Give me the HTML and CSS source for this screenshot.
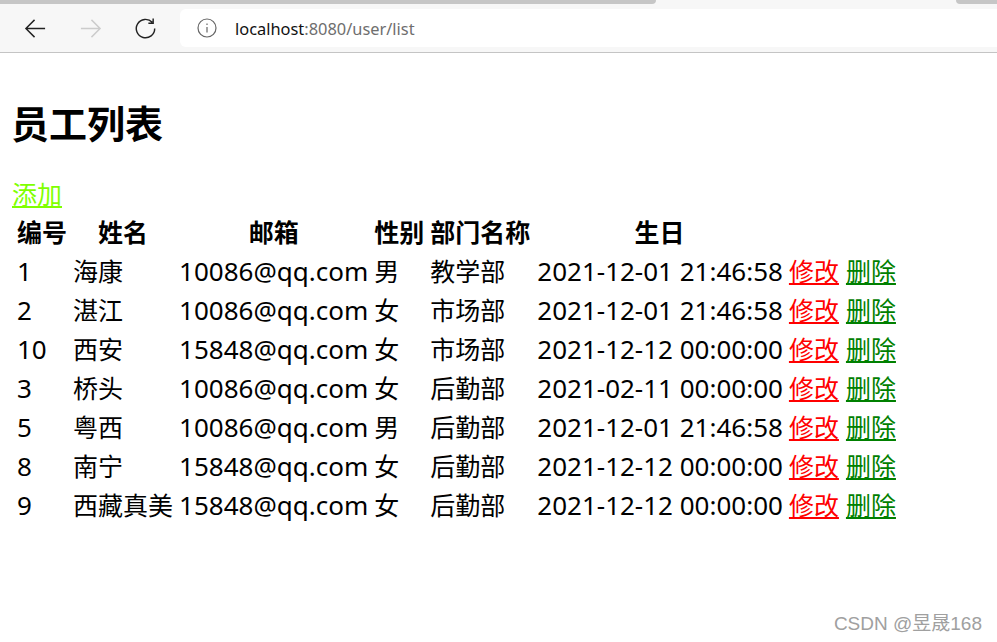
FILE: index.html
```html
<!DOCTYPE html>
<html lang="zh-CN">
<head>
<meta charset="utf-8">
<title>员工列表</title>
<link rel="stylesheet" href="styles.css">
</head>
<body>
<header class="browser">
  <div class="tabstrip"><div class="tab-active"></div><div class="tab-next"></div></div>
  <div class="toolbar">
    <svg class="nav-icon" viewBox="0 0 24 24"><path d="M22 12H2M11 3l-9 9 9 9" fill="none" stroke="#222" stroke-width="1.5"/></svg>
    <svg class="nav-icon" viewBox="0 0 24 24"><path d="M2 12h20M13 3l9 9-9 9" fill="none" stroke="#ccc" stroke-width="1.5"/></svg>
    <svg class="nav-icon" viewBox="0 0 24 24"><path d="M19 5.500A9.600 9.600 0 1 0 21.600 12M20 1.500V6.500H15" fill="none" stroke="#222" stroke-width="1.500"/></svg>
    <div class="address">
      <svg class="info" viewBox="0 0 20 20"><circle cx="10" cy="10" r="9" fill="none" stroke="#666" stroke-width="1.200"/><path d="M10 9v5.500M10 5.500v1.500" stroke="#666" stroke-width="1.200"/></svg>
      <span class="host">localhost</span><span class="path">:8080/user/list</span>
    </div>
  </div>
</header>
<main class="page">
  <h1>员工列表</h1>
  <a class="add" href="#">添加</a>
  <table>
    <thead>
      <tr><th>编号</th><th>姓名</th><th>邮箱</th><th>性别</th><th>部门名称</th><th>生日</th></tr>
    </thead>
    <tbody>
      <tr><td class="latin">1</td><td>海康</td><td class="latin">10086@qq.com</td><td>男</td><td>教学部</td><td class="latin date">2021-12-01 21:46:58</td><td><a class="edit" href="#">修改</a></td><td class="del-cell"><a class="del" href="#">删除</a></td></tr>
      <tr><td class="latin">2</td><td>湛江</td><td class="latin">10086@qq.com</td><td>女</td><td>市场部</td><td class="latin date">2021-12-01 21:46:58</td><td><a class="edit" href="#">修改</a></td><td class="del-cell"><a class="del" href="#">删除</a></td></tr>
      <tr><td class="latin">10</td><td>西安</td><td class="latin">15848@qq.com</td><td>女</td><td>市场部</td><td class="latin date">2021-12-12 00:00:00</td><td><a class="edit" href="#">修改</a></td><td class="del-cell"><a class="del" href="#">删除</a></td></tr>
      <tr><td class="latin">3</td><td>桥头</td><td class="latin">10086@qq.com</td><td>女</td><td>后勤部</td><td class="latin date">2021-02-11 00:00:00</td><td><a class="edit" href="#">修改</a></td><td class="del-cell"><a class="del" href="#">删除</a></td></tr>
      <tr><td class="latin">5</td><td>粤西</td><td class="latin">10086@qq.com</td><td>男</td><td>后勤部</td><td class="latin date">2021-12-01 21:46:58</td><td><a class="edit" href="#">修改</a></td><td class="del-cell"><a class="del" href="#">删除</a></td></tr>
      <tr><td class="latin">8</td><td>南宁</td><td class="latin">15848@qq.com</td><td>女</td><td>后勤部</td><td class="latin date">2021-12-12 00:00:00</td><td><a class="edit" href="#">修改</a></td><td class="del-cell"><a class="del" href="#">删除</a></td></tr>
      <tr><td class="latin">9</td><td>西藏真美</td><td class="latin">15848@qq.com</td><td>女</td><td>后勤部</td><td class="latin date">2021-12-12 00:00:00</td><td><a class="edit" href="#">修改</a></td><td class="del-cell"><a class="del" href="#">删除</a></td></tr>
    </tbody>
  </table>
</main>
<div class="watermark">CSDN @昱晟168</div>
</body>
</html>
```
FILE: styles.css
```css
html, body { margin: 0; height: 100%; overflow: hidden; background: #fff; }
body { font-family: "Noto Sans", "Noto Sans CJK SC", sans-serif; color: #000; position: relative; }
.browser { height: 53px; box-sizing: border-box; background: #f7f7f7; border-bottom: 1px solid #c4c4c4; }
.tabstrip { height: 4px; display: flex; justify-content: space-between; background: #f7f7f7; }
.tab-active { width: 656px; background: #c6c6c6; border-radius: 0 0 6px 0; }
.tab-next { width: 41px; background: #c6c6c6; border-radius: 0 0 0 6px; }
.toolbar { display: flex; align-items: center; height: 48px; padding-left: 24px; }
.nav-icon { width: 23px; height: 23px; margin-right: 32px; flex: none; }
.nav-icon:nth-child(3) { margin-right: 23px; }
.address { flex: 1; height: 38px; background: #fff; border-radius: 6px 0 0 6px; display: flex; align-items: center; padding-left: 17px; font-size: 16.4px; font-family: "Noto Sans", sans-serif; }
.info { width: 20px; height: 20px; margin-right: 18px; }
.host { color: #111; }
.path { color: #6e6e6e; }
.page { padding-left: 12px; }
h1 { margin: 0 0 0 -1px; padding-top: 43px; font-size: 38px; line-height: 54px; font-weight: 700; }
.add { display: block; width: max-content; margin-top: 28px; font-size: 25px; line-height: 33px; color: #7fff00; }
table { border-spacing: 2px; font-size: 25px; line-height: 33px; margin: 1px 0 0 1px; }
th, td { padding: 2px; white-space: nowrap; }
th { text-align: center; font-weight: 700; }
td { text-align: left; }
.latin { font-size: 26px; }
.date, .del-cell { padding-left: 3px; }
.edit { color: #f00; }
.del { color: #008000; }
.watermark { position: absolute; right: 15px; bottom: 7px; font-size: 19px; color: #a0a0a0; font-family: "Liberation Sans", "Noto Sans CJK SC", sans-serif; }
```
